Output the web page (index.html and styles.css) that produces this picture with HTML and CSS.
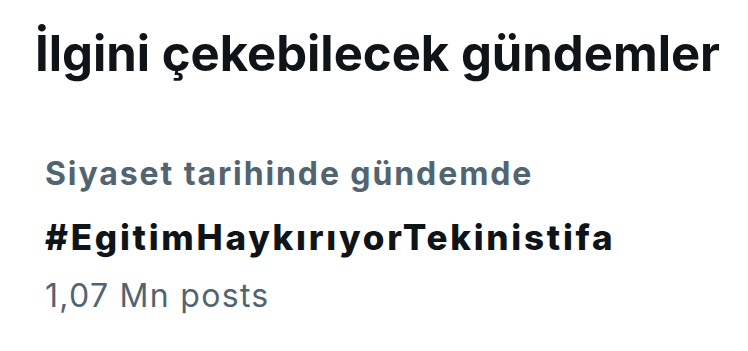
FILE: index.html
```html
<!DOCTYPE html>
<html>
    <head>
        <title>Gündemler</title>
        <meta name="viewport" content="width=device-width, initial-scale=1">
        <link rel="stylesheet" href="styles.css">
    </head>
    <body>
        <h1 class="title">İlgini çekebilecek gündemler</h1>

        <div class="trend">
            <p class="trend-context">Siyaset tarihinde gündemde</p>
            <p class="trend-name">#EgitimHaykırıyorTekinistifa</p>
            <p class="trend-count">1,07 Mn posts</p>
        </div>
    </body>
</html>
```

FILE: styles.css
```css
* {
    box-sizing: border-box;
}
body {
    margin: 0;
    background-color: #fff;
    font-family: Inter, "Noto Sans", sans-serif;
    color: #0f1419;
    font-variant-ligatures: none;
}
.title {
    margin: 0;
    padding: 24px 0 0 35px;
    font-size: 49px;
    font-weight: 700;
    line-height: 60px;
}
.trend {
    padding: 70px 0 0 45px;
}
.trend p {
    margin: 0;
    white-space: nowrap;
}
.trend-context {
    font-size: 32px;
    font-weight: 700;
    line-height: 40px;
    letter-spacing: 1.9px;
    color: #536471;
}
.trend-name {
    padding-top: 21px;
    font-size: 35px;
    font-weight: 800;
    line-height: 44px;
    letter-spacing: 2.75px;
}
.trend-count {
    padding-top: 17px;
    font-size: 32px;
    line-height: 40px;
    letter-spacing: 1.3px;
    color: #536471;
}
```
